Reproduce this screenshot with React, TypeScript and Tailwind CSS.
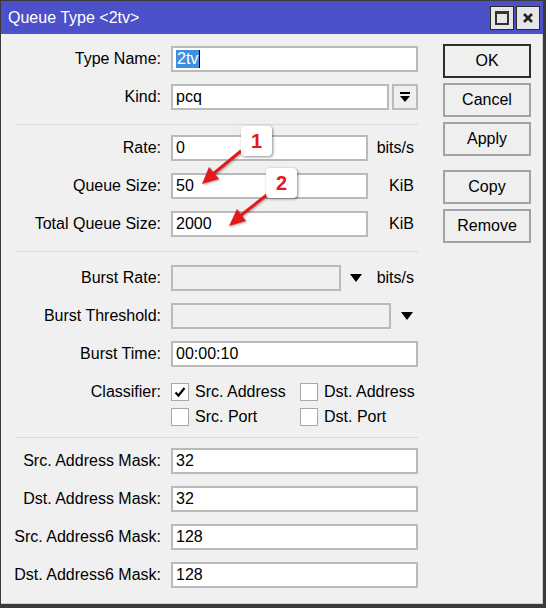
import React from 'react';

const font = { fontFamily: '"Liberation Sans", Arial, sans-serif' };

function Label({ children }: { children: React.ReactNode }) {
  return <div className="w-[159px] shrink-0 text-right text-[16px] leading-[18px] text-black">{children}</div>;
}

function Field({ value, w, disabled, selected }: { value?: string; w: string; disabled?: boolean; selected?: boolean }) {
  return (
    <div
      className={`${w} h-[26px] ml-[10px] flex items-center border-2 border-[#bababa] pl-[3px] text-[16px] text-black ${
        disabled ? 'bg-[#f0f0f0]' : 'bg-white'
      }`}
    >
      {selected ? (
        <>
          <span className="bg-[#3f8fe0] text-white px-[1px] leading-[18px]">{value}</span>
          <span className="w-px h-[18px] bg-black" />
        </>
      ) : (
        value
      )}
    </div>
  );
}

function Unit({ children, w = 'w-[46px]' }: { children?: React.ReactNode; w?: string }) {
  return <div className={`${w} text-right text-[16px] text-black`}>{children}</div>;
}

function Caret() {
  return (
    <svg width="16" height="10" viewBox="0 0 16 10" className="shrink-0">
      <polygon points="2,1 14,1 8,9" fill="#000" />
    </svg>
  );
}

function Check({ on, label }: { on?: boolean; label: string }) {
  return (
    <div className="flex items-center gap-[6px] h-[18px]">
      <div className="w-[18px] h-[18px] bg-white border border-[#a8a8a8] flex items-center justify-center">
        {on && (
          <svg width="12" height="12" viewBox="0 0 12 12">
            <path d="M1.5 6.5 L4.5 9.5 L10.5 2" stroke="#000" strokeWidth="2.2" fill="none" />
          </svg>
        )}
      </div>
      <span className="text-[16px] leading-[18px] text-black">{label}</span>
    </div>
  );
}

function Btn({ children, primary }: { children: React.ReactNode; primary?: boolean }) {
  return (
    <div
      className={`w-[88px] h-[34px] flex items-center justify-center border-2 bg-[#efefef] text-[16px] text-black ${
        primary ? 'border-[#2e2e2e]' : 'border-[#a3a3a3]'
      }`}
    >
      {children}
    </div>
  );
}

function Row({ children, className = '' }: { children: React.ReactNode; className?: string }) {
  return <div className={`flex items-center h-[26px] ${className}`}>{children}</div>;
}

function Sep({ className }: { className: string }) {
  return <div className={`ml-[13px] w-[403px] h-px bg-[#d8d8d8] ${className}`} />;
}

export default function App() {
  return (
    <div className="w-[546px] h-[608px] bg-[#3a3a3a] relative" style={font}>
      <div className="absolute left-[1px] top-[1px] w-[542px] h-[603px] flex flex-col">
        {/* Title bar */}
        <div className="h-[33px] bg-[#4c50c9] flex items-center justify-between pl-[7px] pr-[3px]">
          <span className="text-white text-[16px]">Queue Type &lt;2tv&gt;</span>
          <div className="flex gap-[2px]">
            <div className="w-[24px] h-[24px] bg-[#e6e6e6] border border-[#2a2a2a] flex items-center justify-center">
              <div className="w-[14px] h-[14px] border-2 border-t-[3px] border-[#333]" />
            </div>
            <div className="w-[24px] h-[24px] bg-[#e6e6e6] border border-[#2a2a2a] flex items-center justify-center">
              <svg width="12" height="12" viewBox="0 0 12 12">
                <path d="M2 2 L10 10 M10 2 L2 10" stroke="#222" strokeWidth="2.6" />
              </svg>
            </div>
          </div>
        </div>

        {/* Body */}
        <div className="flex-1 bg-[#f0f0f0] border-r border-b border-[#cfcfcf] flex pl-[1px]">
          {/* Form */}
          <div className="w-[416px] pt-[12px] flex flex-col">
            <Row>
              <Label>Type Name:</Label>
              <Field w="w-[247px]" value="2tv" selected />
            </Row>
            <Row className="mt-[12px]">
              <Label>Kind:</Label>
              <Field w="w-[218px]" value="pcq" />
              <div className="ml-[3px] w-[26px] h-[26px] border-2 border-[#bababa] bg-[#efefef] flex items-center justify-center">
                <svg width="12" height="12" viewBox="0 0 12 12">
                  <rect x="1" y="1" width="10" height="2" fill="#000" />
                  <polygon points="1,5 11,5 6,11" fill="#000" />
                </svg>
              </div>
            </Row>

            <Sep className="mt-[14px] mb-[10px]" />

            <Row>
              <Label>Rate:</Label>
              <Field w="w-[197px]" value="0" />
              <Unit>bits/s</Unit>
            </Row>
            <Row className="mt-[12px]">
              <Label>Queue Size:</Label>
              <Field w="w-[197px]" value="50" />
              <Unit>KiB</Unit>
            </Row>
            <Row className="mt-[12px]">
              <Label>Total Queue Size:</Label>
              <Field w="w-[197px]" value="2000" />
              <Unit>KiB</Unit>
            </Row>

            <Sep className="mt-[14px] mb-[13px]" />

            <Row>
              <Label>Burst Rate:</Label>
              <Field w="w-[170px]" disabled />
              <div className="ml-[7px]">
                <Caret />
              </div>
              <Unit w="w-[50px]">bits/s</Unit>
            </Row>
            <Row className="mt-[12px]">
              <Label>Burst Threshold:</Label>
              <Field w="w-[220px]" disabled />
              <div className="ml-[8px]">
                <Caret />
              </div>
            </Row>
            <Row className="mt-[12px]">
              <Label>Burst Time:</Label>
              <Field w="w-[247px]" value="00:00:10" />
            </Row>

            <div className="mt-[16px] flex items-start">
              <Label>Classifier:</Label>
              <div className="ml-[10px] grid grid-cols-[129px_auto] gap-y-[7px]">
                <Check on label="Src. Address" />
                <Check label="Dst. Address" />
                <Check label="Src. Port" />
                <Check label="Dst. Port" />
              </div>
            </div>

            <Sep className="mt-[11px] mb-[10px]" />

            <Row>
              <Label>Src. Address Mask:</Label>
              <Field w="w-[247px]" value="32" />
            </Row>
            <Row className="mt-[12px]">
              <Label>Dst. Address Mask:</Label>
              <Field w="w-[247px]" value="32" />
            </Row>
            <Row className="mt-[12px]">
              <Label>Src. Address6 Mask:</Label>
              <Field w="w-[247px]" value="128" />
            </Row>
            <Row className="mt-[12px]">
              <Label>Dst. Address6 Mask:</Label>
              <Field w="w-[247px]" value="128" />
            </Row>
          </div>

          {/* Buttons */}
          <div className="ml-[25px] pt-[10px] flex flex-col">
            <Btn primary>OK</Btn>
            <div className="mt-[5px]">
              <Btn>Cancel</Btn>
            </div>
            <div className="mt-[5px]">
              <Btn>Apply</Btn>
            </div>
            <div className="mt-[14px]">
              <Btn>Copy</Btn>
            </div>
            <div className="mt-[5px]">
              <Btn>Remove</Btn>
            </div>
          </div>
        </div>
      </div>

      {/* Annotations */}
      <svg
        className="absolute left-0 top-0 pointer-events-none"
        width="546"
        height="608"
        style={{ filter: 'drop-shadow(1px 1px 1px rgba(0,0,0,0.35))' }}
      >
        <line x1="241" y1="151" x2="213" y2="174" stroke="#e5191a" strokeWidth="3" />
        <polygon points="202,184 219,179 209,167" fill="#e5191a" />
        <line x1="268" y1="194" x2="240" y2="216" stroke="#e5191a" strokeWidth="3" />
        <polygon points="229,226 246,221 237,209" fill="#e5191a" />
      </svg>
      <div className="absolute left-[241px] top-[126px] w-[31px] h-[30px] bg-white rounded-[4px] shadow-[1px_1px_3px_rgba(0,0,0,0.45)] flex items-center justify-center text-[#e5191a] font-bold text-[20px]">
        1
      </div>
      <div className="absolute left-[266px] top-[168px] w-[31px] h-[30px] bg-white rounded-[4px] shadow-[1px_1px_3px_rgba(0,0,0,0.45)] flex items-center justify-center text-[#e5191a] font-bold text-[20px]">
        2
      </div>
    </div>
  );
}
